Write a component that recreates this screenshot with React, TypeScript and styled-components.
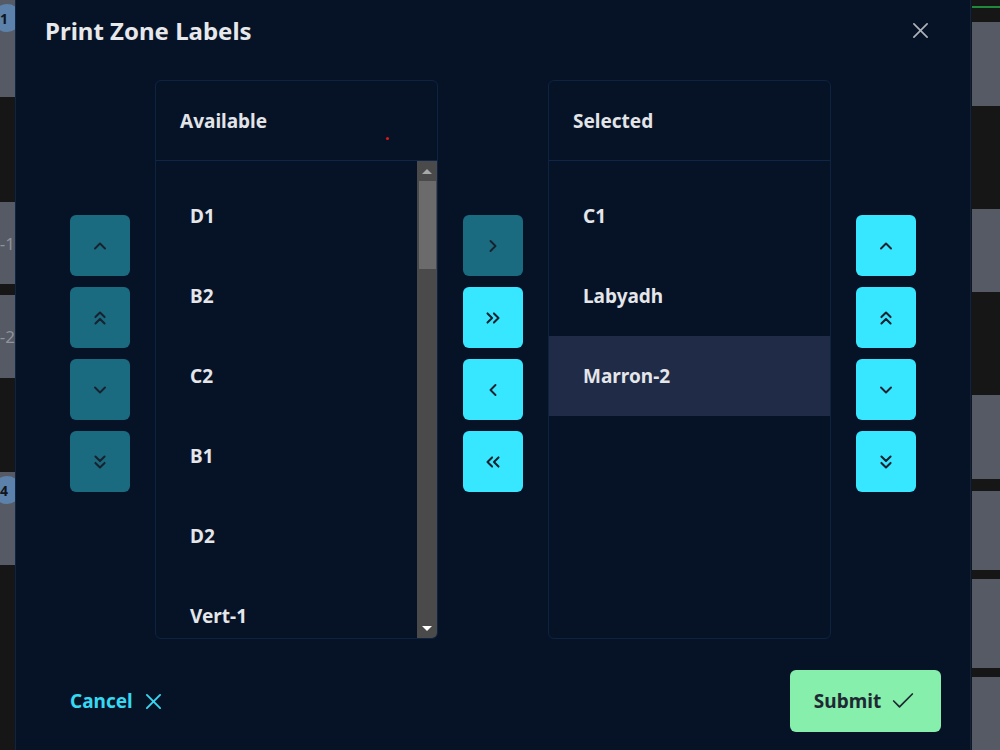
import React, { useState } from 'react';
import styled, { createGlobalStyle } from 'styled-components';
import {
  ChevronUp,
  ChevronsUp,
  ChevronDown,
  ChevronsDown,
  ChevronRight,
  ChevronsRight,
  ChevronLeft,
  ChevronsLeft,
  Check,
} from 'lucide-react';

const GlobalStyle = createGlobalStyle`
  html, body {
    margin: 0;
    padding: 0;
    background: #161616;
  }
  body {
    font-family: "Noto Sans", "Open Sans", sans-serif;
  }
`;

// zones on the board behind the dialog
const leftLane = [
  { h: 97, mt: 0, label: '', badge: '1' },
  { h: 82, mt: 105, label: 'D-1' },
  { h: 83, mt: 11, label: 'D-2' },
  { h: 93, mt: 94, label: '', badge: '4' },
];

const rightLane = [
  { h: 84, mt: 14 },
  { h: 83, mt: 103 },
  { h: 84, mt: 103 },
  { h: 79, mt: 12 },
  { h: 89, mt: 9 },
  { h: 81, mt: 9 },
];

const available = [
  'D1', 'B2', 'C2', 'B1', 'D2', 'Vert-1', 'Vert-2', 'Vert-3', 'A1', 'A2',
  'A3', 'A4', 'B3', 'B4', 'C3', 'C4', 'D3', 'D4', 'E1', 'E2',
];

const selectedZones = ['C1', 'Labyadh', 'Marron-2'];

// thin cross used by the close and cancel buttons
const Cross = ({ size = 18, stroke = 2 }: { size?: number; stroke?: number }) => (
  <svg width={size} height={size} viewBox="0 0 18 18" fill="none">
    <path d="M2 2 16 16M16 2 2 16" stroke="currentColor" strokeWidth={stroke} strokeLinecap="round" />
  </svg>
);

const single = { size: 20, strokeWidth: 2.3 };
const double = { size: 22, strokeWidth: 2.2 };

const App = () => {
  const [active, setActive] = useState('Marron-2');

  return (
    <Page>
      <GlobalStyle />
      <Lane $width={15}>
        {leftLane.map((c, i) => (
          <BoardCard key={i} $h={c.h} $mt={c.mt}>
            {c.badge && <Badge>{c.badge}</Badge>}
            {c.label}
          </BoardCard>
        ))}
      </Lane>
      <Lane $width={28}>
        <GreenBar />
        {rightLane.map((c, i) => (
          <BoardCard key={i} $h={c.h} $mt={c.mt} />
        ))}
      </Lane>

      <Dialog>
        <Header>
          <Title>Print Zone Labels</Title>
          <CloseButton aria-label="close">
            <Cross size={17} stroke={1.8} />
          </CloseButton>
        </Header>

        <Body>
          <ButtonColumn>
            <MoveButton $tone="muted"><ChevronUp {...single} /></MoveButton>
            <MoveButton $tone="muted"><ChevronsUp {...double} /></MoveButton>
            <MoveButton $tone="muted"><ChevronDown {...single} /></MoveButton>
            <MoveButton $tone="muted"><ChevronsDown {...double} /></MoveButton>
          </ButtonColumn>

          <Panel>
            <PanelHeader>
              Available
              <Dot />
            </PanelHeader>
            <PanelBody>
              <List>
                {available.map(z => (
                  <Item key={z}>{z}</Item>
                ))}
              </List>
              <ScrollBar>
                <ScrollArrow $dir="up" />
                <ScrollThumb />
                <ScrollArrow $dir="down" />
              </ScrollBar>
            </PanelBody>
          </Panel>

          <ButtonColumn>
            <MoveButton $tone="muted"><ChevronRight {...single} /></MoveButton>
            <MoveButton $tone="bright"><ChevronsRight {...double} /></MoveButton>
            <MoveButton $tone="bright"><ChevronLeft {...single} /></MoveButton>
            <MoveButton $tone="bright"><ChevronsLeft {...double} /></MoveButton>
          </ButtonColumn>

          <Panel>
            <PanelHeader>Selected</PanelHeader>
            <PanelBody>
              <List>
                {selectedZones.map(z => (
                  <Item key={z} $active={z === active} onClick={() => setActive(z)}>
                    {z}
                  </Item>
                ))}
              </List>
            </PanelBody>
          </Panel>

          <ButtonColumn>
            <MoveButton $tone="bright"><ChevronUp {...single} /></MoveButton>
            <MoveButton $tone="bright"><ChevronsUp {...double} /></MoveButton>
            <MoveButton $tone="bright"><ChevronDown {...single} /></MoveButton>
            <MoveButton $tone="bright"><ChevronsDown {...double} /></MoveButton>
          </ButtonColumn>
        </Body>

        <Footer>
          <CancelButton>
            Cancel
            <Cross size={17} stroke={2} />
          </CancelButton>
          <SubmitButton>
            Submit
            <Check size={28} strokeWidth={1.5} />
          </SubmitButton>
        </Footer>
      </Dialog>
    </Page>
  );
};

const Page = styled.div`
  position: relative;
  width: 1000px;
  height: 750px;
  overflow: hidden;
  display: flex;
  justify-content: space-between;
  background: #161616;
`;

const Lane = styled.div<{ $width: number }>`
  width: ${({ $width }) => $width}px;
  display: flex;
  flex-direction: column;
  overflow: hidden;
`;

const BoardCard = styled.div<{ $h: number; $mt: number }>`
  position: relative;
  flex-shrink: 0;
  height: ${({ $h }) => $h}px;
  margin-top: ${({ $mt }) => $mt}px;
  background: #555a64;
  display: flex;
  align-items: center;
  justify-content: flex-end;
  color: #8f939a;
  font-size: 17px;
  white-space: nowrap;
`;

const Badge = styled.span`
  position: absolute;
  right: -6px;
  top: 4px;
  width: 28px;
  height: 28px;
  border-radius: 50%;
  background: #5c81ab;
  color: #10151c;
  font-size: 14px;
  font-weight: 700;
  display: flex;
  align-items: center;
  padding-left: 7px;
  box-sizing: border-box;
`;

const GreenBar = styled.div`
  flex-shrink: 0;
  height: 2px;
  margin-top: 6px;
  background: #1f8a3c;
`;

const Dialog = styled.div`
  position: absolute;
  left: 15px;
  top: 0;
  width: 956px;
  height: 750px;
  box-sizing: border-box;
  background: #061327;
  border-left: 1px solid #0e2444;
  border-right: 1px solid #0e2444;
  display: flex;
  flex-direction: column;
`;

const Header = styled.div`
  height: 60px;
  padding: 0 41px 0 29px;
  display: flex;
  align-items: center;
  justify-content: space-between;
`;

const Title = styled.h2`
  margin: 0;
  font-size: 24px;
  font-weight: 700;
  color: #e6e8eb;
`;

const CloseButton = styled.button`
  border: none;
  background: transparent;
  padding: 0;
  color: #aeb2b8;
  display: flex;
  cursor: pointer;
`;

const Body = styled.div`
  display: flex;
  align-items: flex-start;
  gap: 25px;
  padding: 20px 54px 0;
`;

const ButtonColumn = styled.div`
  display: flex;
  flex-direction: column;
  gap: 11px;
  margin-top: 135px;
`;

const MoveButton = styled.button<{ $tone: 'muted' | 'bright' }>`
  width: 60px;
  height: 61px;
  border: none;
  border-radius: 6px;
  display: flex;
  align-items: center;
  justify-content: center;
  cursor: pointer;
  color: #18222e;
  background: ${({ $tone }) => ($tone === 'bright' ? '#37e7ff' : '#1a6a80')};
`;

const Panel = styled.div`
  width: 283px;
  height: 559px;
  box-sizing: border-box;
  border: 1px solid #0f2240;
  border-radius: 6px;
  display: flex;
  flex-direction: column;
  overflow: hidden;
`;

const PanelHeader = styled.div`
  position: relative;
  flex-shrink: 0;
  height: 80px;
  box-sizing: border-box;
  border-bottom: 1px solid #10254a;
  padding-left: 24px;
  display: flex;
  align-items: center;
  font-size: 19px;
  font-weight: 700;
  color: #e2e4e8;
`;

const Dot = styled.span`
  position: absolute;
  left: 230px;
  top: 56px;
  width: 3px;
  height: 3px;
  border-radius: 50%;
  background: #e01818;
`;

const PanelBody = styled.div`
  flex: 1;
  min-height: 0;
  display: flex;
`;

const List = styled.div`
  flex: 1;
  padding-top: 15px;
  overflow: hidden;
`;

const Item = styled.div<{ $active?: boolean }>`
  height: 80px;
  padding-left: 34px;
  display: flex;
  align-items: center;
  font-size: 19px;
  font-weight: 700;
  color: #e4e6ea;
  cursor: pointer;
  background: ${({ $active }) => ($active ? '#1f2b47' : 'transparent')};
`;

const ScrollBar = styled.div`
  width: 20px;
  flex-shrink: 0;
  background: #4a4a4a;
  display: flex;
  flex-direction: column;
  justify-content: space-between;
`;

const ScrollArrow = styled.div<{ $dir: 'up' | 'down' }>`
  height: 20px;
  display: flex;
  align-items: center;
  justify-content: center;
  &::after {
    content: '';
    border-left: 5px solid transparent;
    border-right: 5px solid transparent;
    ${({ $dir }) =>
      $dir === 'up'
        ? 'border-bottom: 5px solid #a8a8a8;'
        : 'border-top: 5px solid #ffffff;'}
  }
`;

const ScrollThumb = styled.div`
  height: 88px;
  margin: 0 1px 0 2px;
  margin-bottom: auto;
  background: #6b6b6b;
`;

const Footer = styled.div`
  margin-top: auto;
  padding: 0 29px 18px 54px;
  display: flex;
  align-items: center;
  justify-content: space-between;
`;

const CancelButton = styled.button`
  border: none;
  background: transparent;
  padding: 0;
  display: flex;
  align-items: center;
  gap: 12px;
  font-family: inherit;
  font-size: 19px;
  font-weight: 700;
  color: #37d8f2;
  cursor: pointer;
`;

const SubmitButton = styled.button`
  width: 151px;
  height: 62px;
  border: none;
  border-radius: 6px;
  background: #86efac;
  display: flex;
  align-items: center;
  justify-content: center;
  gap: 8px;
  font-family: inherit;
  font-size: 19px;
  font-weight: 700;
  color: #1f2933;
  cursor: pointer;
`;

export default App;
